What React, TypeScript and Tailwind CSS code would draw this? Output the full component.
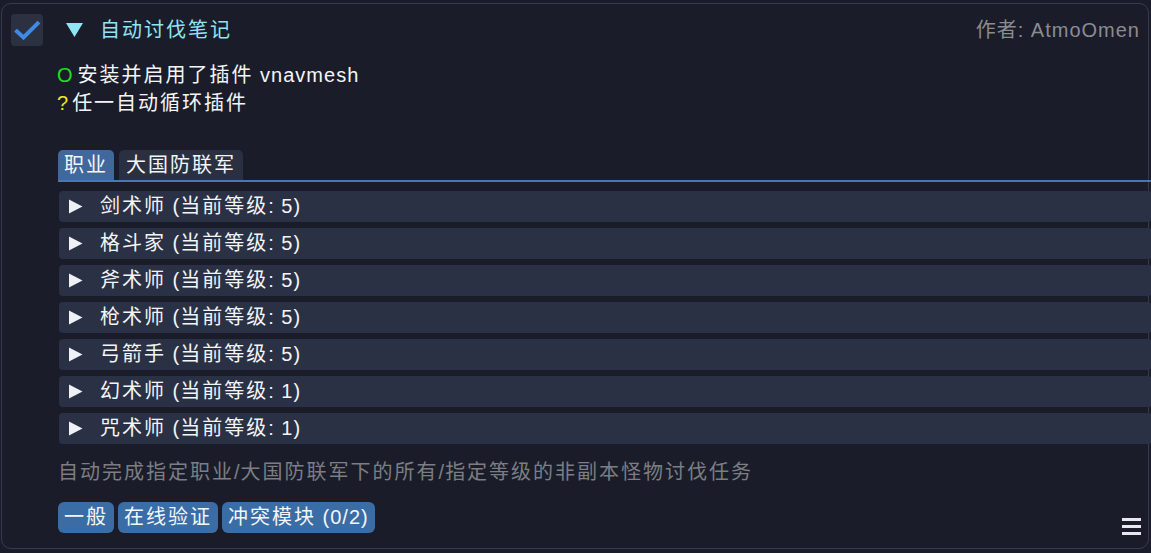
import { Fragment } from 'react';

const jobs = [
  { name: '剑术师', level: 5 },
  { name: '格斗家', level: 5 },
  { name: '斧术师', level: 5 },
  { name: '枪术师', level: 5 },
  { name: '弓箭手', level: 5 },
  { name: '幻术师', level: 1 },
  { name: '咒术师', level: 1 },
];

const tags = ['一般', '在线验证', '冲突模块 (0/2)'];

// CJK glyphs in the reference sit a little wider apart than the Latin ones
function T({ children }: { children: string }) {
  const parts = children.split(/([\u3000-\u9fff\uff00-\uffef]+)/);
  return (
    <>
      {parts.map((p, i) =>
        /[\u3000-\u9fff\uff00-\uffef]/.test(p) ? (
          <span key={i} className="tracking-[2px]">
            {p}
          </span>
        ) : (
          <Fragment key={i}>{p}</Fragment>
        )
      )}
    </>
  );
}

function RightTriangle() {
  return (
    <svg width="15" height="15" viewBox="0 0 15 15" className="shrink-0">
      <polygon points="1,0.5 14.5,7.5 1,14.5" fill="#eef1f6" />
    </svg>
  );
}

export default function App() {
  return (
    <div
      className="w-[1151px] h-[553px] overflow-hidden bg-[#1a1d29] text-[20px] tracking-[1px] text-[#f4f5f8]"
      style={{ fontFamily: '"Liberation Sans", "Noto Sans CJK SC", sans-serif' }}
    >
      <div className="ml-px mt-[3px] w-[1148px] h-[546px] rounded-[10px] border border-[#363b4c] pl-[9px] pt-[10px] pr-[8px]">
        {/* Header */}
        <div className="flex items-center h-8">
          <div className="w-8 h-8 rounded-[4px] bg-[#2c3142] flex items-center justify-center shrink-0">
            <svg width="32" height="32" viewBox="0 0 32 32">
              <polyline
                points="6,17.5 12.5,23.5 26.5,9.5"
                fill="none"
                stroke="#3f8ae4"
                strokeWidth="4"
                strokeLinecap="square"
              />
            </svg>
          </div>
          <svg width="17" height="14" viewBox="0 0 17 14" className="ml-[23px] shrink-0">
            <polygon points="0,0 17,0 8.5,14" fill="#8fe4f5" />
          </svg>
          <span className="ml-[17px] text-[#8fe4f5] leading-7">
            <T>自动讨伐笔记</T>
          </span>
          <span className="ml-auto text-[#8a8c92] leading-7">作者: AtmoOmen</span>
        </div>

        {/* Body */}
        <div className="pl-[47px] -mr-[12px]">
          <div className="mt-[15px] leading-7 -ml-px">
            <div>
              <span className="text-[#1fe01f] tracking-normal">O</span>
              <span className="ml-[5px]">
                <T>安装并启用了插件 vnavmesh</T>
              </span>
            </div>
            <div>
              <span className="text-[#f0e81a] tracking-normal">?</span>
              <span className="ml-[4px]">
                <T>任一自动循环插件</T>
              </span>
            </div>
          </div>

          {/* Tabs */}
          <div className="mt-[33px] flex gap-[5px] border-b-2 border-[#4677b8]">
            <div className="h-[30px] px-[6px] rounded-t-[5px] bg-[#41689c] leading-[30px]">
              <T>职业</T>
            </div>
            <div className="h-[30px] px-[7px] rounded-t-[5px] bg-[#2a3042] leading-[30px]">
              <T>大国防联军</T>
            </div>
          </div>

          {/* Job rows */}
          <div className="mt-[9px] flex flex-col gap-[6px] ml-px">
            {jobs.map((job) => (
              <div
                key={job.name}
                className="h-[31px] rounded-[4px] bg-[#2a3144] flex items-center pl-[9px]"
              >
                <RightTriangle />
                <span className="ml-[17px] leading-[31px]">
                  <T>{`${job.name} (当前等级: ${job.level})`}</T>
                </span>
              </div>
            ))}
          </div>

          <div className="mt-[14px] leading-7 text-[#7c7e84]">
            <T>自动完成指定职业/大国防联军下的所有/指定等级的非副本怪物讨伐任务</T>
          </div>

          {/* Tags + menu */}
          <div className="mt-[16px] flex items-end">
            <div className="flex gap-[4px]">
              {tags.map((t) => (
                <div
                  key={t}
                  className="h-[31px] px-[6px] rounded-[6px] bg-[#3a6ca6] leading-[31px] text-[#f4f6fa]"
                >
                  <T>{t}</T>
                </div>
              ))}
            </div>
            <div className="ml-auto mr-[11px] mb-[-2px] flex flex-col gap-[4px]">
              <div className="w-[19px] h-[3px] bg-[#e6e8ee]" />
              <div className="w-[19px] h-[3px] bg-[#e6e8ee]" />
              <div className="w-[19px] h-[3px] bg-[#e6e8ee]" />
            </div>
          </div>
        </div>
      </div>
    </div>
  );
}
